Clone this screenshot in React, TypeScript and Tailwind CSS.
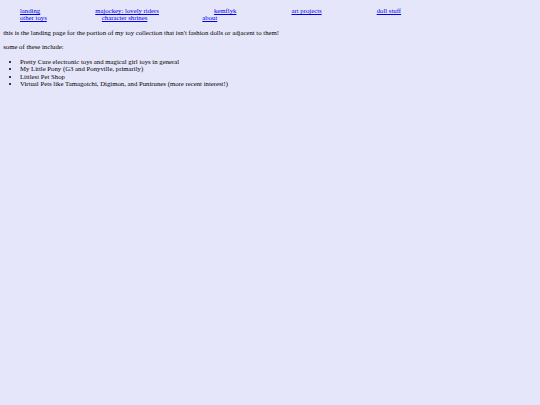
const navLinks = [
  "landing",
  "majockey: lovely riders",
  "kemflyk",
  "art projects",
  "doll stuff",
  "other toys",
  "character shrines",
  "about",
];

const interests = [
  "Pretty Cure electronic toys and magical girl toys in general",
  "My Little Pony (G3 and Ponyville, primarily)",
  "Littlest Pet Shop",
  "Virtual Pets like Tamagotchi, Digimon, and Punirunes (more recent interest!)",
];

export default function App() {
  return (
    <div className="min-h-screen bg-[#e6e6fa] p-[3.2px] font-['Liberation_Serif','Times_New_Roman',serif] text-[6.75px] leading-[7.3px] text-black">
      <ul className="mt-[3.8px] flex w-[450px] flex-wrap gap-x-[55px] pl-[16.8px]">
        {navLinks.map((link) => (
          <li key={link}>
            <a href="#" className="text-[#0000ee] underline">
              {link}
            </a>
          </li>
        ))}
      </ul>

      <p className="mt-[7px]">
        this is the landing page for the portion of my toy collection that isn't fashion dolls or adjacent to them!
      </p>

      <p className="mt-[7.5px]">some of these include:</p>

      <ul className="mt-[7.5px] list-disc pl-[16.8px]">
        {interests.map((item) => (
          <li key={item}>{item}</li>
        ))}
      </ul>
    </div>
  );
}
